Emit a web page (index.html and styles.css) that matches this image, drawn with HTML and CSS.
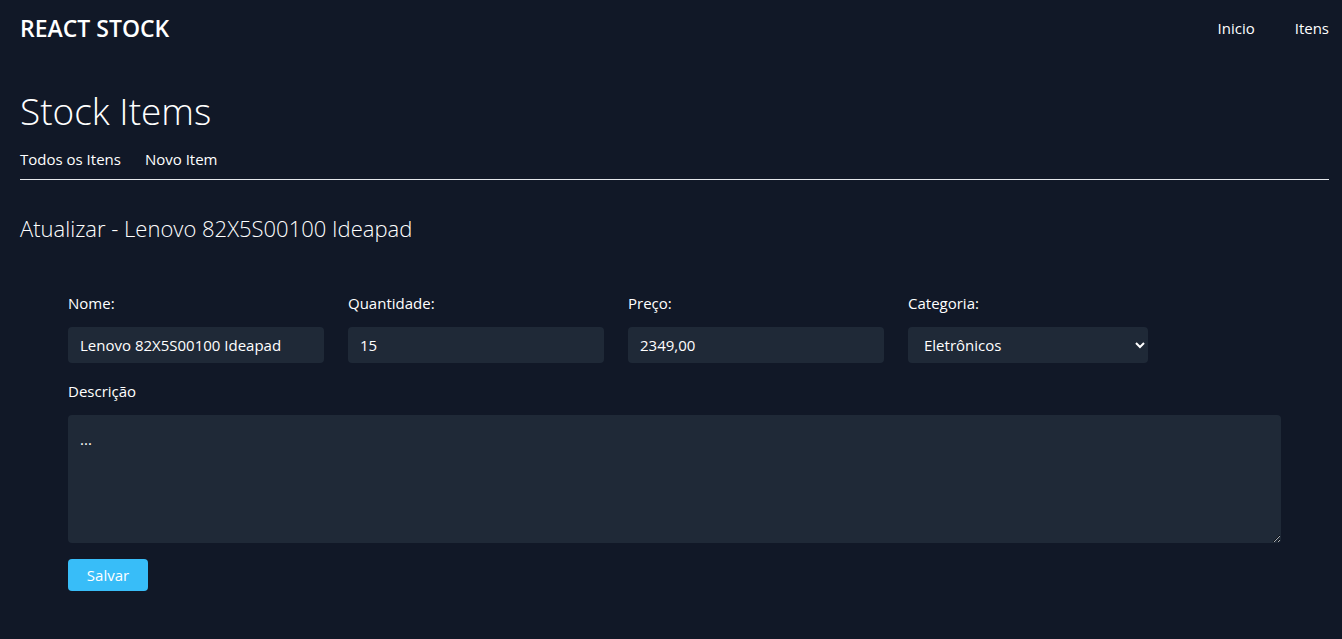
FILE: index.html
```html
<!DOCTYPE html>
<html lang="pt-BR">
<head>
<meta charset="utf-8">
<title>React Stock</title>
<link rel="stylesheet" href="styles.css">
</head>
<body>
<header class="topbar">
  <a class="brand" href="#">REACT STOCK</a>
  <nav class="topnav"><a href="#">Inicio</a><a href="#">Itens</a></nav>
</header>
<main class="page">
  <h1 class="title">Stock Items</h1>
  <nav class="tabs"><a href="#">Todos os Itens</a><a href="#">Novo Item</a></nav>
  <h2 class="subtitle">Atualizar - Lenovo 82X5S00100 Ideapad</h2>
  <form class="form">
    <div class="row">
      <div class="field"><label for="name">Nome:</label><input class="control" id="name" type="text" value="Lenovo 82X5S00100 Ideapad"></div>
      <div class="field"><label for="qty">Quantidade:</label><input class="control" id="qty" type="text" value="15"></div>
      <div class="field"><label for="price">Preço:</label><input class="control" id="price" type="text" value="2349,00"></div>
      <div class="field field-select"><label for="category">Categoria:</label><select class="control select" id="category"><option>Eletrônicos</option></select></div>
    </div>
    <div class="description"><label for="desc">Descrição</label><textarea class="control area" id="desc">...</textarea></div>
    <button class="save" type="button">Salvar</button>
  </form>
</main>
</body>
</html>
```
FILE: styles.css
```css
* { box-sizing: border-box; }
body {
  margin: 0;
  background: #111827;
  color: #fff;
  font: 15px/24px "Open Sans", "Noto Sans", sans-serif;
}
a { color: inherit; text-decoration: none; }
.topbar {
  display: flex;
  justify-content: space-between;
  align-items: center;
  padding: 12px 13px 12px 20px;
}
.brand { font-size: 23px; line-height: 32px; font-weight: 600; }
.topnav { display: flex; gap: 40px; }
.page { padding: 31px 13px 0 20px; }
.title { margin: 0; font-size: 37px; line-height: 48px; font-weight: 300; }
.tabs {
  display: flex;
  gap: 24px;
  padding: 12px 0 8px;
  border-bottom: 1px solid #e5e7eb;
}
.subtitle { margin: 32px 0 0; font-size: 22px; line-height: 32px; font-weight: 300; }
.form { padding: 47px 48px 0; }
.row { display: flex; gap: 24px; }
.field { width: 256px; }
.field-select { width: 240px; }
label { display: block; margin-bottom: 12px; line-height: 24px; }
.control {
  display: block;
  width: 100%;
  height: 36px;
  padding: 0 12px;
  border: 0;
  border-radius: 4px;
  background: #1f2937;
  color: #fff;
  font: inherit;
}
.description { margin-top: 16px; }
.area { height: 128px; padding: 12px; resize: vertical; }
.save {
  display: block;
  width: 80px;
  height: 32px;
  margin-top: 16px;
  padding: 0;
  border: 0;
  border-radius: 4px;
  background: #38bdf8;
  color: #fff;
  font: inherit;
}
```
